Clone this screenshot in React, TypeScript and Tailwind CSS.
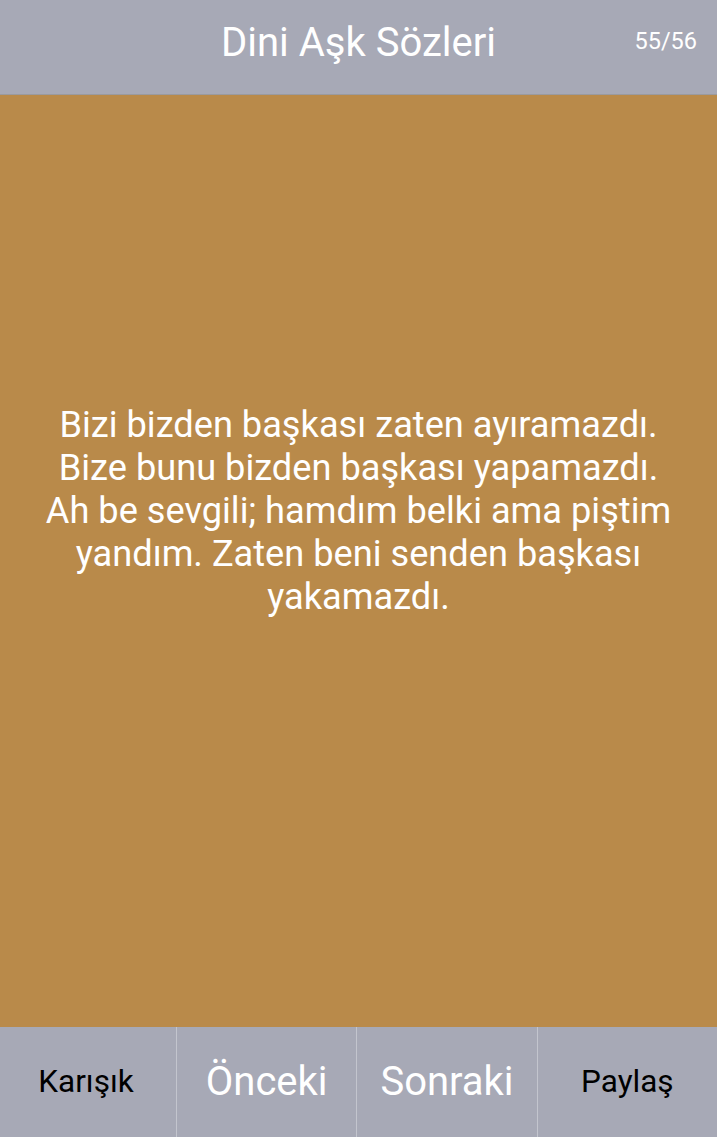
export default function App() {
  const quote =
    "Bizi bizden başkası zaten ayıramazdı. Bize bunu bizden başkası yapamazdı. Ah be sevgili; hamdım belki ama piştim yandım. Zaten beni senden başkası yakamazdı.";

  return (
    <div
      className="flex h-[1137px] w-[717px] flex-col bg-[#b98a4a]"
      style={{ fontFamily: "Roboto, 'Liberation Sans', sans-serif" }}
    >
      <header className="relative flex h-[95px] shrink-0 items-center justify-center border-b border-[#9a9a9e] bg-[#a7a9b6]">
        <h1 className="-mt-[8px] text-[40px] leading-none text-white">Dini Aşk Sözleri</h1>
        <span className="absolute right-[20px] top-[30px] text-[23.5px] leading-none text-white">55/56</span>
      </header>

      <main className="flex flex-1 items-center justify-center px-[40px] pb-[102px]">
        <p className="text-center text-[36.2px] leading-[43px] text-white">{quote}</p>
      </main>

      <nav className="grid h-[110px] shrink-0 grid-cols-[176px_1fr_1fr_1fr] bg-[#a7a9b6]">
        <button className="pr-[4px] text-[31.5px] text-black">Karışık</button>
        <button className="border-l border-[#c3c5ce] text-[40px] text-white">Önceki</button>
        <button className="border-l border-[#c3c5ce] text-[40px] text-white">Sonraki</button>
        <button className="border-l border-[#c3c5ce] text-[31.5px] text-black">Paylaş</button>
      </nav>
    </div>
  );
}
